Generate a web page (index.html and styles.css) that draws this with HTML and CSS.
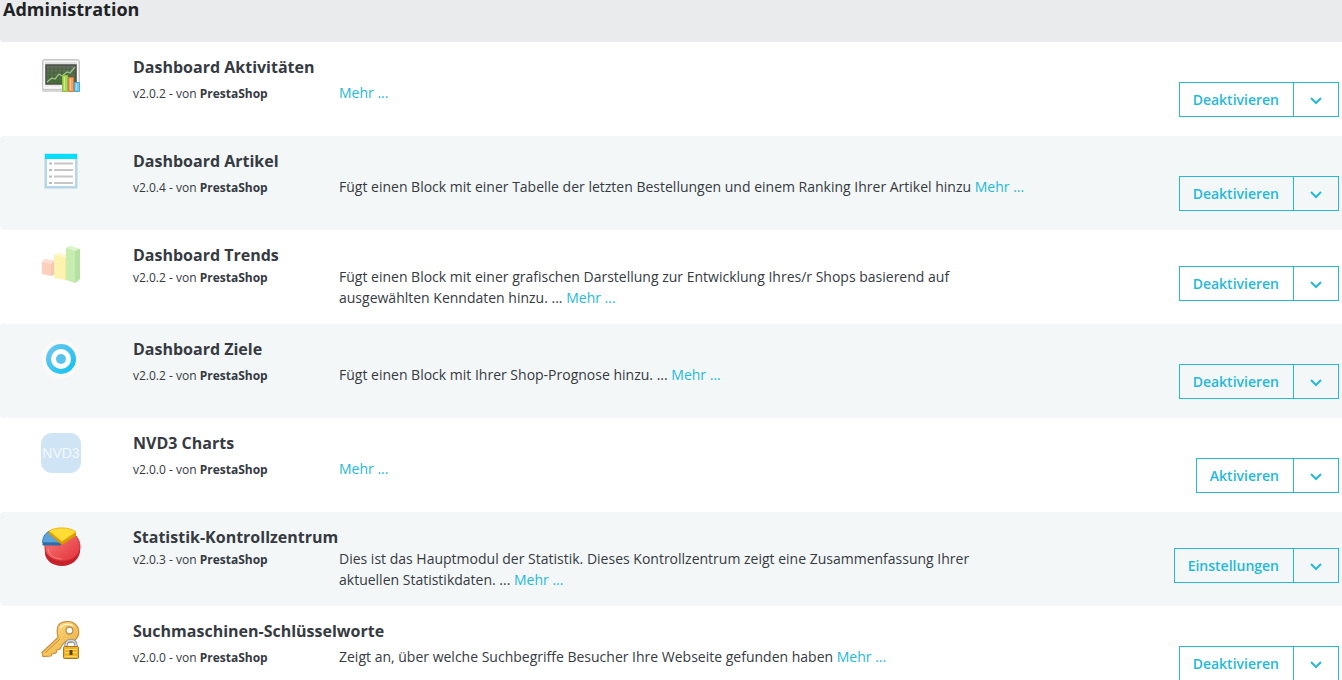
FILE: index.html
```html
<!DOCTYPE html>
<html lang="de">
<head>
    <meta charset="UTF-8">
    <meta name="viewport" content="width=device-width, initial-scale=1.0">
    <title>Module - Administration</title>
    <link rel="stylesheet" href="styles.css">
</head>
<body>

    <svg class="defs" width="0" height="0" aria-hidden="true">
        <defs>
            <linearGradient id="frame" x1="0" y1="0" x2="0" y2="1"><stop offset="0" stop-color="#dcdcdc"/><stop offset="1" stop-color="#f0f0f0"/></linearGradient>
            <linearGradient id="screen" x1="0" y1="0" x2="0" y2="1"><stop offset="0" stop-color="#686b66"/><stop offset="1" stop-color="#4a7436"/></linearGradient>
            <linearGradient id="goal" x1="0" y1="0" x2="1" y2="1"><stop offset="0" stop-color="#6cc7ef"/><stop offset="1" stop-color="#12c3f0"/></linearGradient>
            <linearGradient id="gold" x1="0" y1="0" x2="1" y2="1"><stop offset="0" stop-color="#ffe394"/><stop offset="1" stop-color="#eba92f"/></linearGradient>
            <linearGradient id="red" x1="0" y1="0" x2="1" y2="1"><stop offset="0" stop-color="#f77b78"/><stop offset="1" stop-color="#e33139"/></linearGradient>
        </defs>
    </svg>

    <h1 class="group-title">Administration</h1>

    <main class="module-list">

        <section class="module">
            <svg class="module-icon" viewBox="0 0 40 40" aria-hidden="true">
                <rect x="1" y="4" width="38" height="31" rx="2" fill="#d6d6d6"/>
                <rect x="1.500" y="2.500" width="37" height="30" rx="2" fill="url(#frame)" stroke="#c6c6c6"/>
                <rect x="3.500" y="4.500" width="33" height="26" fill="none" stroke="#fafafa"/>
                <rect x="5" y="8" width="30" height="19" fill="url(#screen)" stroke="#4b4d4b" stroke-width="1.500"/>
                <path d="M9 8v19M13 8v19M17 8v19M21 8v19M25 8v19M29 8v19M33 8v19M5 12h30M5 16h30M5 20h30M5 24h30" stroke="#3d5c31" stroke-width=".6"/>
                <path d="M6 25l5-4 3 1 4-5 3 2 5-4 3 1 5-6" fill="none" stroke="#9cc489" stroke-width="1.300"/>
                <path d="M21.500 18.500h5v16h-5z" fill="#a9d957" stroke="#8fbf3d"/>
                <path d="M27.500 20.500h5v14h-5z" fill="#f0a264" stroke="#cf8040"/>
                <path d="M33.500 25.500h5v9h-5z" fill="#75c8ea" stroke="#46a9d5"/>
                <path d="M23.500 20v13M29.500 22v11M35.500 27v6" stroke="#fff" stroke-opacity=".4"/>
            </svg>
            <div class="module-content">
                <h2 class="module-name">Dashboard Aktivitäten</h2>
                <div class="module-body">
                    <div class="module-row">
                        <p class="module-meta">v2.0.2 - von <b>PrestaShop</b></p>
                        <p class="module-desc"><a href="#">Mehr ...</a></p>
                        <div class="module-actions">
                            <button type="button" class="btn">Deaktivieren</button>
                            <button type="button" class="btn btn-toggle" aria-label="Weitere Aktionen"><svg viewBox="0 0 12 8" aria-hidden="true"><path d="M1 1l5 5 5-5"/></svg></button>
                        </div>
                    </div>
                </div>
            </div>
        </section>

        <section class="module">
            <svg class="module-icon" viewBox="0 0 40 40" aria-hidden="true">
                <rect x="3" y="2" width="34" height="36" rx="1" fill="#d5e4ea"/>
                <rect x="5" y="4" width="30" height="32" fill="#fff" stroke="#b4d8e9" stroke-width="2"/>
                <rect x="4" y="3" width="32" height="5" fill="#04e0fb"/>
                <path d="M8 12.500h3M8 19h3M8 25.500h3M8 32h3" stroke="#bbb" stroke-width="2"/>
                <path d="M13 12.500h19M13 19h19M13 25.500h19M13 32h19" stroke="#c6c6c6" stroke-width="2"/>
            </svg>
            <div class="module-content">
                <h2 class="module-name">Dashboard Artikel</h2>
                <div class="module-body">
                    <div class="module-row">
                        <p class="module-meta">v2.0.4 - von <b>PrestaShop</b></p>
                        <p class="module-desc">Fügt einen Block mit einer Tabelle der letzten Bestellungen und einem Ranking Ihrer Artikel hinzu <a href="#">Mehr ...</a></p>
                        <div class="module-actions">
                            <button type="button" class="btn">Deaktivieren</button>
                            <button type="button" class="btn btn-toggle" aria-label="Weitere Aktionen"><svg viewBox="0 0 12 8" aria-hidden="true"><path d="M1 1l5 5 5-5"/></svg></button>
                        </div>
                    </div>
                </div>
            </div>
        </section>

        <section class="module">
            <svg class="module-icon" viewBox="0 0 40 40" aria-hidden="true">
                <path d="M1 17l3-3 10 2v13l-4 2-9-2z" fill="#fbd0bd"/>
                <path d="M1 17l9 2 4-3-10-2z" fill="#fde0d3"/><path d="M10 19l4-3v13l-4 2z" fill="#f8c6b1"/>
                <path d="M13 10l4-2 12 2v24l-5 1-11-2z" fill="#fdf2ae"/>
                <path d="M13 10l11 3 5-3-12-2z" fill="#fff8d1"/><path d="M24 13l5-3v24l-5 1z" fill="#f8ea9e"/>
                <path d="M25 3l4-2 10 3v30l-5 4-9-3z" fill="#c6ecb0"/>
                <path d="M25 3l9 3 5-2-10-3z" fill="#dcf5cc"/><path d="M34 6l5-2v30l-5 4z" fill="#b5e2a0"/>
            </svg>
            <div class="module-content">
                <h2 class="module-name">Dashboard Trends</h2>
                <div class="module-body">
                    <div class="module-row">
                        <p class="module-meta">v2.0.2 - von <b>PrestaShop</b></p>
                        <p class="module-desc">Fügt einen Block mit einer grafischen Darstellung zur Entwicklung Ihres/r Shops basierend auf ausgewählten Kenndaten hinzu. ... <a href="#">Mehr ...</a></p>
                        <div class="module-actions">
                            <button type="button" class="btn">Deaktivieren</button>
                            <button type="button" class="btn btn-toggle" aria-label="Weitere Aktionen"><svg viewBox="0 0 12 8" aria-hidden="true"><path d="M1 1l5 5 5-5"/></svg></button>
                        </div>
                    </div>
                </div>
            </div>
        </section>

        <section class="module">
            <svg class="module-icon" viewBox="0 0 40 40" aria-hidden="true">
                <circle cx="20" cy="20" r="19.500" fill="#faf9f8"/>
                <circle cx="20" cy="20" r="12.500" fill="#fff" stroke="url(#goal)" stroke-width="5"/>
                <circle cx="20" cy="20" r="5" fill="#59c3ee"/>
            </svg>
            <div class="module-content">
                <h2 class="module-name">Dashboard Ziele</h2>
                <div class="module-body">
                    <div class="module-row">
                        <p class="module-meta">v2.0.2 - von <b>PrestaShop</b></p>
                        <p class="module-desc">Fügt einen Block mit Ihrer Shop-Prognose hinzu. ... <a href="#">Mehr ...</a></p>
                        <div class="module-actions">
                            <button type="button" class="btn">Deaktivieren</button>
                            <button type="button" class="btn btn-toggle" aria-label="Weitere Aktionen"><svg viewBox="0 0 12 8" aria-hidden="true"><path d="M1 1l5 5 5-5"/></svg></button>
                        </div>
                    </div>
                </div>
            </div>
        </section>

        <section class="module">
            <svg class="module-icon" viewBox="0 0 40 40" aria-hidden="true">
                <rect width="40" height="40" rx="11" fill="#cfe4f5"/>
                <text class="icon-text" x="20" y="25" text-anchor="middle">NVD3</text>
            </svg>
            <div class="module-content">
                <h2 class="module-name">NVD3 Charts</h2>
                <div class="module-body">
                    <div class="module-row">
                        <p class="module-meta">v2.0.0 - von <b>PrestaShop</b></p>
                        <p class="module-desc"><a href="#">Mehr ...</a></p>
                        <div class="module-actions">
                            <button type="button" class="btn">Aktivieren</button>
                            <button type="button" class="btn btn-toggle" aria-label="Weitere Aktionen"><svg viewBox="0 0 12 8" aria-hidden="true"><path d="M1 1l5 5 5-5"/></svg></button>
                        </div>
                    </div>
                </div>
            </div>
        </section>

        <section class="module">
            <svg class="module-icon" viewBox="0 0 40 40" aria-hidden="true">
                <path d="M4 20v7c1 7 8 12 17 12 10 0 17-7 18-14v-7z" fill="#c5222b"/>
                <path d="M4 17.500h17L34 8c3 3 5 7 5 12 0 8-8 14-17 14S4 29 4 21z" fill="url(#red)" stroke="#d22c34"/>
                <path d="M1.500 15.500v3h18l1-3z" fill="#2c6ea8"/>
                <path d="M1.500 15.500C2 9 5 5 9.500 4l11 11.500z" fill="#5ba3d9" stroke="#3780b9"/>
                <path d="M8 4v3l13 11 14-9V5z" fill="#d99a08"/>
                <path d="M8 4c7-4.500 21-4 27 1L21 14.500z" fill="#ffdd35" stroke="#eeb616"/>
                <path d="M7 22c1 7 8 10 14 10" fill="none" stroke="#ff9d99" stroke-opacity=".6"/>
            </svg>
            <div class="module-content">
                <h2 class="module-name">Statistik-Kontrollzentrum</h2>
                <div class="module-body">
                    <div class="module-row">
                        <p class="module-meta">v2.0.3 - von <b>PrestaShop</b></p>
                        <p class="module-desc">Dies ist das Hauptmodul der Statistik. Dieses Kontrollzentrum zeigt eine Zusammenfassung Ihrer aktuellen Statistikdaten. ... <a href="#">Mehr ...</a></p>
                        <div class="module-actions">
                            <button type="button" class="btn">Einstellungen</button>
                            <button type="button" class="btn btn-toggle" aria-label="Weitere Aktionen"><svg viewBox="0 0 12 8" aria-hidden="true"><path d="M1 1l5 5 5-5"/></svg></button>
                        </div>
                    </div>
                </div>
            </div>
        </section>

        <section class="module">
            <svg class="module-icon" viewBox="0 0 40 40" aria-hidden="true">
                <path d="M17 5c3-5 12-6 17-2 5 4 5 12 0 16-3 3-7 3-10 2l-3 3-2 4-3 1-1 3-4 1-1 2-8 .5-1-4 16-15c-1-4-1-8 0-11.500z" fill="url(#gold)" stroke="#c98f45" stroke-width="1.200"/>
                <path d="M4 32l15-14" stroke="#c98b35" fill="none"/>
                <path d="M19 7c3-4 9-5 13-2" stroke="#fff3c4" stroke-width="1.500" fill="none"/>
                <circle cx="28.500" cy="9.500" r="3.500" fill="#fff" stroke="#b98d55" stroke-width="1.400"/>
                <path d="M25 28v-4c0-6 10-6 10 0v4" fill="none" stroke="#909497" stroke-width="3.500"/>
                <path d="M25 28v-4c0-6 10-6 10 0v4" fill="none" stroke="#d5dadd" stroke-width="1.500"/>
                <rect x="22.500" y="25.500" width="15" height="12" rx="1" fill="#f0b321" stroke="#a8742a"/>
                <path d="M24 28.500h12M24 31.500h12M24 35.500h12" stroke="#ffd965"/>
                <path d="M28.500 29h3v5h-3z" fill="#5b4010"/>
            </svg>
            <div class="module-content">
                <h2 class="module-name">Suchmaschinen-Schlüsselworte</h2>
                <div class="module-body">
                    <div class="module-row">
                        <p class="module-meta">v2.0.0 - von <b>PrestaShop</b></p>
                        <p class="module-desc">Zeigt an, über welche Suchbegriffe Besucher Ihre Webseite gefunden haben <a href="#">Mehr ...</a></p>
                        <div class="module-actions">
                            <button type="button" class="btn">Deaktivieren</button>
                            <button type="button" class="btn btn-toggle" aria-label="Weitere Aktionen"><svg viewBox="0 0 12 8" aria-hidden="true"><path d="M1 1l5 5 5-5"/></svg></button>
                        </div>
                    </div>
                </div>
            </div>
        </section>

    </main>

</body>
</html>
```
FILE: styles.css
```css
body {
    margin: 0;
    font-family: "Open Sans", sans-serif;
    font-size: 14px;
    line-height: 21px;
    color: #363a41;
    background-color: #fff;
    overflow: hidden;
}

h1, h2, p {
    margin: 0;
}

.defs {
    display: block;
}

.group-title {
    padding: 0 3px 24px;
    font-size: 18px;
    line-height: 18px;
    font-weight: 700;
    color: #202226;
    background-color: #eaebec;
    border-radius: 0 0 0 3px;
}

.module {
    display: flex;
    box-sizing: border-box;
    min-height: 94px;
    padding: 15px 3px 16px 41px;
    border-radius: 3px 0 0 3px;
}

.module:nth-child(even) {
    background-color: #f3f7f8;
}

.module-icon {
    flex: none;
    width: 40px;
    height: 40px;
    margin-right: 52px;
}

.icon-text {
    font-family: "Liberation Sans", sans-serif;
    font-size: 14px;
    fill: #f4f9fd;
}

.module-content {
    flex: 1;
    min-width: 0;
}

.module-name {
    font-size: 16px;
    line-height: 21px;
    font-weight: 700;
}

/* one-line modules sit centred in the space of a two-line description */
.module-body {
    display: flex;
    align-items: center;
    min-height: 42px;
}

.module-row {
    display: flex;
    flex: 1;
    align-items: flex-start;
}

.module-meta {
    flex: none;
    width: 206px;
    font-size: 12px;
    line-height: 23px;
}

.module-meta b {
    font-weight: 700;
}

.module-desc {
    flex: 1;
}

.module-desc a {
    color: #25b9d7;
    text-decoration: none;
}

.module-desc a:hover {
    text-decoration: underline;
}

.module-actions {
    display: flex;
    flex: none;
    justify-content: flex-end;
    width: 310px;
}

.btn {
    height: 35px;
    padding: 0 14px 0 13px;
    font-family: inherit;
    font-size: 14px;
    font-weight: 600;
    color: #25b9d7;
    background-color: transparent;
    border: 1px solid #25b9d7;
    cursor: pointer;
}

.btn:hover {
    color: #fff;
    background-color: #25b9d7;
}

.btn-toggle {
    width: 46px;
    padding: 0;
    margin-left: -1px;
}

.btn-toggle svg {
    width: 12px;
    height: 8px;
    fill: none;
    stroke: currentColor;
    stroke-width: 2;
}
```
